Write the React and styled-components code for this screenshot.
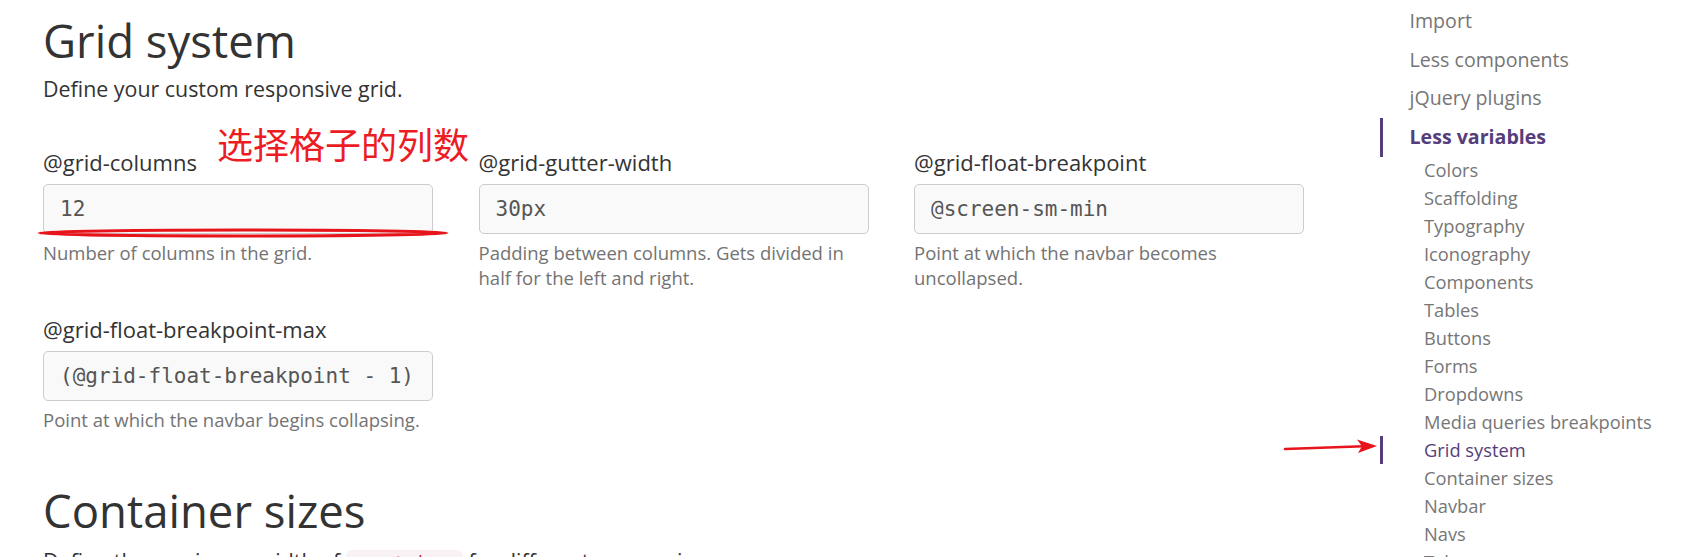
import React from 'react';
import styled, { createGlobalStyle } from 'styled-components';

const GlobalStyle = createGlobalStyle`
  html, body {
    margin: 0;
    padding: 0;
    overflow: hidden;
    background: #fff;
  }
  body {
    font-family: "Open Sans", "Noto Sans", sans-serif;
    color: #333;
  }
  * {
    box-sizing: border-box;
  }
`;

const Page = styled.div`
  position: relative;
  display: flex;
  width: 1704px;
  height: 557px;
  overflow: hidden;
`;

const Main = styled.main`
  position: relative;
  flex: none;
  width: 1304px;
  padding-left: 43px;
`;

const Title = styled.h1`
  margin: ${(p) => p.$top}px 0 0;
  font-size: 45.5px;
  font-weight: 400;
  line-height: 54px;
  color: #333;
`;

const Lead = styled.p`
  margin: ${(p) => p.$top}px 0 0;
  font-size: 21.4px;
  line-height: 30px;
  white-space: nowrap;
`;

const Fields = styled.div`
  display: grid;
  grid-template-columns: repeat(3, 390px);
  column-gap: 45.5px;
  row-gap: 25px;
  margin-top: 44px;
`;

const Field = styled.div`
  display: flex;
  flex-direction: column;
`;

const Label = styled.label`
  display: block;
  margin-bottom: 8px;
  font-size: 22px;
  line-height: 28px;
  color: #333;
`;

const Input = styled.input`
  width: 390px;
  height: 50px;
  margin: 0;
  padding: 0 16px;
  border: 1px solid #ccc;
  border-radius: 5px;
  background: #f9f9f9;
  color: #555;
  font-family: "DejaVu Sans Mono", "Liberation Mono", monospace;
  font-size: 21px;
  outline: none;
`;

const Help = styled.p`
  margin: 6px 0 0;
  font-size: 18.5px;
  line-height: 25px;
  color: #737373;
`;

const Code = styled.code`
  padding: 3px 6px;
  border-radius: 6px;
  background: #f9f2f4;
  color: #c7254e;
  font-family: "DejaVu Sans Mono", "Liberation Mono", monospace;
  font-size: 17.5px;
`;

const Note = styled.div`
  position: absolute;
  left: 217px;
  top: 125px;
  font-family: "Noto Sans CJK SC", sans-serif;
  font-size: 36px;
  line-height: 36px;
  color: #ec1c24;
  white-space: nowrap;
`;

const Underline = styled.svg`
  position: absolute;
  left: 36px;
  top: 225px;
`;

const Arrow = styled.svg`
  position: absolute;
  left: 1280px;
  top: 436px;
`;

const Sidebar = styled.nav`
  flex: none;
  margin-left: 76px;
  padding-top: 2px;
`;

const NavList = styled.ul`
  margin: ${(p) => (p.$sub ? '-1px 0 0' : '0')};
  padding: 0;
  list-style: none;
`;

const NavLink = styled.a`
  display: block;
  padding: ${(p) => (p.$sub ? '0 0 0 41px' : '5px 0 5.7px 26.5px')};
  border-left: 3px solid ${(p) => (p.$active ? '#563d7c' : 'transparent')};
  font-size: ${(p) => (p.$sub ? '18.3px' : '19.6px')};
  line-height: 28px;
  font-weight: ${(p) => (p.$bold ? 700 : 400)};
  color: ${(p) => (p.$active ? '#563d7c' : '#767676')};
  text-decoration: none;
  white-space: nowrap;
`;

const fields = [
  { name: '@grid-columns', value: '12', help: 'Number of columns in the grid.' },
  { name: '@grid-gutter-width', value: '30px', help: 'Padding between columns. Gets divided in half for the left and right.' },
  { name: '@grid-float-breakpoint', value: '@screen-sm-min', help: 'Point at which the navbar becomes uncollapsed.' },
  { name: '@grid-float-breakpoint-max', value: '(@grid-float-breakpoint - 1)', help: 'Point at which the navbar begins collapsing.' },
];

const topNav = ['Import', 'Less components', 'jQuery plugins'];

const subNav = [
  'Colors',
  'Scaffolding',
  'Typography',
  'Iconography',
  'Components',
  'Tables',
  'Buttons',
  'Forms',
  'Dropdowns',
  'Media queries breakpoints',
  'Grid system',
  'Container sizes',
  'Navbar',
  'Navs',
  'Tabs',
  'Pagination',
];

function App() {
  return (
    <Page>
      <GlobalStyle />
      <Main>
        <Title $top={13}>Grid system</Title>
        <Lead $top={7}>Define your custom responsive grid.</Lead>
        <Fields>
          {fields.map((f) => (
            <Field key={f.name}>
              <Label>{f.name}</Label>
              <Input type="text" readOnly defaultValue={f.value} />
              <Help>{f.help}</Help>
            </Field>
          ))}
        </Fields>
        <Title $top={50.5}>Container sizes</Title>
        <Lead $top={9.5}>
          Define the maximum width of <Code>.container</Code> for different screen sizes.
        </Lead>
        <Note>选择格子的列数</Note>
        <Underline width="414" height="16" viewBox="0 0 414 16">
          <ellipse cx="207" cy="8" rx="204" ry="3" fill="none" stroke="#e8141c" strokeWidth="3" />
        </Underline>
      </Main>
      <Sidebar>
        <NavList>
          {topNav.map((item) => (
            <li key={item}>
              <NavLink href="#">{item}</NavLink>
            </li>
          ))}
          <li>
            <NavLink href="#" $active $bold>
              Less variables
            </NavLink>
            <NavList $sub>
              {subNav.map((item) => (
                <li key={item}>
                  <NavLink href="#" $sub $active={item === 'Grid system'}>
                    {item}
                  </NavLink>
                </li>
              ))}
            </NavList>
          </li>
        </NavList>
      </Sidebar>
      <Arrow width="100" height="20" viewBox="0 0 100 20">
        <line x1="5" y1="13" x2="84" y2="10.3" stroke="#e8141c" strokeWidth="2.6" strokeLinecap="round" />
        <polygon points="97,10 77,3.5 82,10.2 78,17" fill="#e8141c" />
      </Arrow>
    </Page>
  );
}

export default App;
